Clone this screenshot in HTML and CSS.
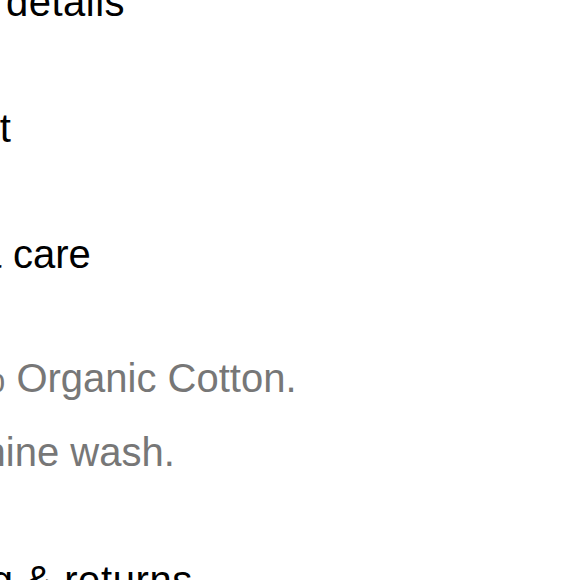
FILE: index.html
```html
<!DOCTYPE html>
<html lang="en">
<head>
<meta charset="utf-8">
<title>Product info</title>
<link rel="stylesheet" href="styles.css">
</head>
<body>
<div class="accordion">
  <section class="item">
    <h2 class="item-title spaced">Product details</h2>
  </section>
  <section class="item">
    <h2 class="item-title">Size &amp; fit</h2>
  </section>
  <section class="item open">
    <h2 class="item-title">Fabric &amp; care</h2>
    <div class="item-body">
      <p class="line indent-a">100% Organic Cotton.</p>
      <p class="line indent-b">Machine wash.</p>
    </div>
  </section>
  <section class="item">
    <h2 class="item-title wide">Shipping &amp; returns</h2>
  </section>
</div>
</body>
</html>
```
FILE: styles.css
```css
html, body {
  margin: 0;
  padding: 0;
  background: #ffffff;
}
body {
  width: 580px;
  height: 580px;
  overflow: hidden;
  font-family: "Liberation Sans", Arial, sans-serif;
  font-size: 40px;
  color: #000000;
}
.accordion {
  margin-top: -61px;
  margin-left: -147px;
  display: flex;
  flex-direction: column;
}
.item {
  padding: 40px 0;
}
.item.open {
  padding-bottom: 28px;
}
.item-title {
  margin: 0;
  font-size: 40px;
  font-weight: 400;
  line-height: 46px;
  white-space: nowrap;
  color: #000000;
}
.item-title.spaced {
  letter-spacing: 0.5px;
}
.item-title.wide {
  letter-spacing: 0.6px;
}
.item-body {
  padding-top: 64px;
  color: #777777;
}
.line {
  margin: 0;
  line-height: 74px;
  white-space: nowrap;
}
.indent-a {
  padding-left: 50px;
}
.indent-b {
  padding-left: 55px;
}
```
